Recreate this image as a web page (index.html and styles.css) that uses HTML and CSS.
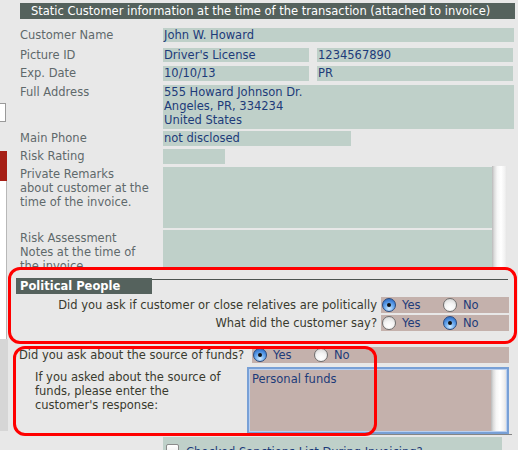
FILE: index.html
```html
<!DOCTYPE html>
<html>
<head>
<meta charset="utf-8">
<link rel="stylesheet" href="styles.css">
</head>
<body>
<div class="page">
  <aside class="side">
    <div class="side-input"></div>
    <div class="side-red"></div>
    <div class="side-panel"></div>
    <div class="side-grey"></div>
  </aside>
  <main class="main">
    <div class="hdr">Static Customer information at the time of the transaction (attached to invoice)</div>
    <div class="info">
      <div class="row r1"><div class="lbl">Customer Name</div><div class="fld">John W. Howard</div></div>
      <div class="row r2"><div class="lbl">Picture ID</div><div class="pair"><div class="fld">Driver's License</div><div class="fld">1234567890</div></div></div>
      <div class="row r3"><div class="lbl">Exp. Date</div><div class="pair"><div class="fld">10/10/13</div><div class="fld">PR</div></div></div>
      <div class="row r4"><div class="lbl">Full Address</div><div class="fld tall">555 Howard Johnson Dr.<br>Angeles, PR, 334234<br>United States</div></div>
      <div class="row r5"><div class="lbl">Main Phone</div><div class="fld phone">not disclosed</div></div>
      <div class="row r6"><div class="lbl">Risk Rating</div><div class="fld rating"></div></div>
      <div class="scrollzone">
        <div class="lbl ml">Private Remarks<br>about customer at the<br>time of the invoice.</div>
        <div class="fld area1"></div>
        <div class="sbar"></div>
        <div class="lbl ml">Risk Assessment<br>Notes at the time of<br>the invoice.</div>
        <div class="fld area2"></div>
      </div>
    </div>
    <section class="pol">
      <div class="pol-head"><div class="pol-title">Political People</div><div class="pol-line"></div></div>
      <div class="qrow q1">
        <div class="qtext">Did you ask if customer or close relatives are politically</div>
        <div class="ans"><span class="opt"><span class="radio on"></span>Yes</span><span class="opt"><span class="radio"></span>No</span></div>
      </div>
      <div class="qrow q2">
        <div class="qtext">What did the customer say?</div>
        <div class="ans"><span class="opt"><span class="radio"></span>Yes</span><span class="opt"><span class="radio on"></span>No</span></div>
      </div>
    </section>
    <section class="funds">
      <div class="frow">
        <div class="ftext">Did you ask about the source of funds?</div>
        <div class="ans fans"><span class="opt"><span class="radio on"></span>Yes</span><span class="opt"><span class="radio"></span>No</span></div>
      </div>
      <div class="frow2">
        <div class="fsub">If you asked about the source of<br>funds, please enter the<br>customer's response:</div>
        <div class="resp"><div class="resp-text">Personal funds</div><div class="sbar rbar"></div></div>
        <div class="rule"></div>
      </div>
    </section>
    <div class="sanc"><span class="check"></span><span class="sanc-text">Checked Sanctions List During Invoicing?</span></div>
  </main>
  <div class="mark mark1"></div>
  <div class="mark mark2"></div>
</div>
</body>
</html>
```

FILE: styles.css
```css
html, body {
  margin: 0;
  padding: 0;
  background: #e8e8e8;
  overflow: hidden;
}
body {
  font-family: "DejaVu Sans", "Noto Sans", sans-serif;
  font-size: 11.5px;
  line-height: 14px;
}
.page {
  position: relative;
  display: flex;
  width: 518px;
  height: 450px;
  overflow: hidden;
}
.side {
  width: 8px;
  flex: none;
  display: flex;
  flex-direction: column;
}
.side > div, .main > *, .info > *, .pol > *, .funds > * {
  flex: none;
}
.side-input {
  margin-top: 103px;
  width: 5px;
  height: 17px;
  background: #fff;
  border: 1px solid #9a9a9a;
  border-left: none;
}
.side-red {
  margin-top: 29px;
  width: 7px;
  height: 30px;
  background: #a61f16;
}
.side-panel {
  width: 6px;
  height: 158px;
  background: #fff;
  border-right: 1px solid #b8b8b8;
}
.side-grey {
  width: 8px;
  height: 92px;
  background: #d6d6d6;
}
.main {
  flex: 1;
  display: flex;
  flex-direction: column;
}
.hdr {
  margin: 3px 0 0 12px;
  width: 495px;
  height: 16px;
  line-height: 16px;
  padding-left: 11px;
  box-sizing: border-box;
  background: #55625d;
  color: #fff;
  white-space: nowrap;
  overflow: hidden;
}
.info {
  margin: 9px 0 0 12px;
  display: flex;
  flex-direction: column;
}
.row {
  display: grid;
  grid-template-columns: 143px 351px;
}
.r2 { margin-top: 6px; }
.r3 { margin-top: 4px; }
.r4 { margin-top: 4px; }
.r5 { margin-top: 2px; }
.r6 { margin-top: 3px; }
.lbl {
  color: #5f696b;
  white-space: nowrap;
  line-height: 14px;
}
.fld {
  background: #bfd0c9;
  color: #1d3b79;
  height: 15px;
  line-height: 15px;
  padding-left: 1px;
  white-space: nowrap;
  overflow: hidden;
}
.r1 .fld, .r2 .fld { height: 14px; line-height: 14px; }
.pair {
  display: grid;
  grid-template-columns: 146px 196px;
  column-gap: 8px;
}
.tall {
  height: 44px;
  line-height: 14px;
}
.phone { width: 187px; }
.rating { width: 61px; }
.scrollzone {
  margin-top: 2px;
  display: grid;
  grid-template-columns: 143px 329px 15px;
  grid-template-rows: 62px 39px;
  row-gap: 2px;
  height: 101px;
  overflow: hidden;
}
.ml { padding-top: 1px; }
.area1 { height: 61px; margin-top: 1px; }
.area2 { height: 40px; }
.sbar {
  background: linear-gradient(to right, #b9b9b9 0%, #dcdcdc 15%, #f6f6f6 35%, #ffffff 60%, #f2f2f2 85%, #e4e4e4 100%);
}
.scrollzone .sbar {
  grid-column: 3;
  grid-row: 1 / 3;
}
.pol {
  padding: 11px 0 0 8px;
  display: flex;
  flex-direction: column;
  height: 76px;
  box-sizing: border-box;
}
.pol-head {
  display: flex;
  width: 492px;
  height: 16px;
}
.pol-title {
  width: 136px;
  background: #55625d;
  color: #fff;
  font-weight: bold;
  line-height: 16px;
  padding-left: 4px;
  box-sizing: border-box;
}
.pol-line {
  flex: 1;
  margin-top: 1px;
  border-top: 1px solid #4d5350;
}
.qrow {
  display: grid;
  grid-template-columns: 361px 128px;
  column-gap: 4px;
  height: 16px;
}
.q1 { margin-top: 3px; }
.q2 { margin-top: 2px; }
.qtext {
  text-align: right;
  color: #393a2e;
  line-height: 16px;
  white-space: nowrap;
}
.ans {
  background: #c4b1ac;
  display: flex;
  align-items: center;
  padding-left: 1px;
  color: #1d3b79;
}
.opt {
  display: inline-flex;
  align-items: center;
  gap: 6px;
  width: 61px;
  line-height: 16px;
}
.radio {
  position: relative;
  width: 12px;
  height: 12px;
  border-radius: 50%;
  border: 1px solid #6e6e6e;
  background: radial-gradient(circle at 50% 75%, #ffffff 0%, #f4f4f4 45%, #cfcfcf 100%);
  flex: none;
}
.radio.on {
  border-color: #2a4a7c;
  background: radial-gradient(circle at 50% 80%, #d4ecff 0%, #79b4f2 35%, #3f82d8 70%, #2c62b4 100%);
}
.radio.on::after {
  content: "";
  position: absolute;
  left: 4px;
  top: 4px;
  width: 4px;
  height: 4px;
  border-radius: 50%;
  background: #111;
}
.funds {
  padding: 4px 0 0 11px;
  display: flex;
  flex-direction: column;
}
.frow {
  display: grid;
  grid-template-columns: 233px 257px;
  height: 16px;
}
.ftext {
  color: #393a2e;
  line-height: 16px;
  white-space: nowrap;
}
.frow2 {
  margin-top: 4px;
  display: grid;
  grid-template-columns: 228px 262px;
}
.fsub {
  padding: 3px 0 0 16px;
  color: #393a2e;
  white-space: nowrap;
}
.resp {
  position: relative;
  height: 67px;
  box-sizing: border-box;
  border: 2px solid #78a0d6;
  box-shadow: inset 0 0 0 1px #b9cff0;
  background: #c4b1ac;
  display: flex;
}
.resp-text {
  flex: 1;
  padding: 3px 0 0 3px;
  color: #1d3b79;
}
.rbar {
  width: 15px;
  margin: 1px 1px 1px 0;
}
.rule {
  grid-column: 2;
  height: 1px;
  margin-left: 1px;
  width: 264px;
  background: #858585;
}
.sanc {
  margin: 2px 0 0 155px;
  width: 339px;
  height: 20px;
  background: #bfd0c9;
  display: flex;
  align-items: flex-start;
  gap: 7px;
  padding: 7px 0 0 3px;
  box-sizing: border-box;
  color: #1d3b79;
}
.check {
  width: 11px;
  height: 11px;
  border: 1px solid #8a8a8a;
  border-radius: 2px;
  background: linear-gradient(#ffffff, #e6e6e6);
  flex: none;
}
.sanc-text {
  line-height: 14px;
  margin-top: 1px;
}
.mark {
  position: absolute;
  border: 3px solid #ff0000;
  border-radius: 12px;
  box-sizing: border-box;
  pointer-events: none;
}
.mark1 {
  left: 8px;
  top: 267px;
  width: 509px;
  height: 77px;
}
.mark2 {
  left: 13px;
  top: 346px;
  width: 364px;
  height: 90px;
}
```
